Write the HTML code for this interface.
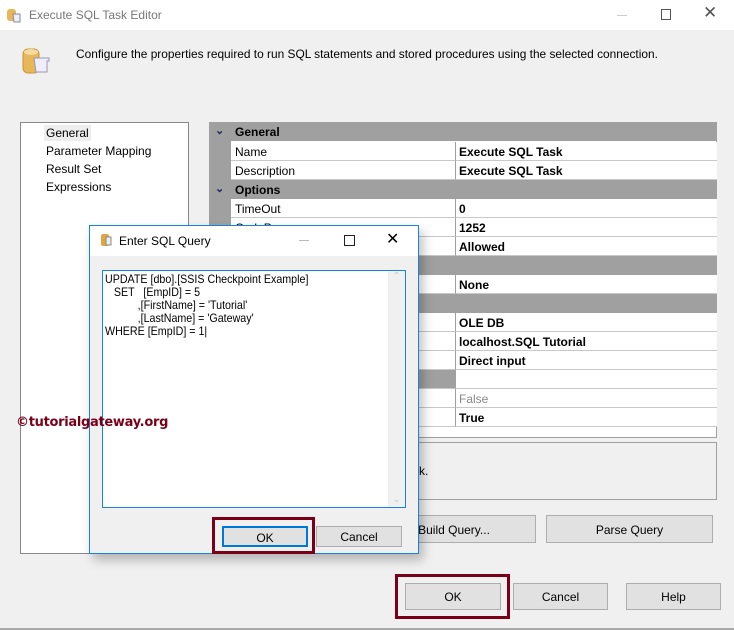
<!DOCTYPE html>
<html><head><meta charset="utf-8"><style>
*{margin:0;padding:0;box-sizing:border-box}
body{width:734px;height:630px;background:#f0f0f0;font-family:"Liberation Sans",sans-serif;font-size:12px;color:#000;position:relative;overflow:hidden}
.a{position:absolute}
.btn{position:absolute;background:#e1e1e1;border:1px solid #adadad;text-align:center;font-size:12px}
.row{position:absolute;left:209px;width:508px;height:19px}
.hd{background:#a0a0a0;font-weight:bold}
.nm{position:absolute;left:22px;width:224px;height:19px;background:#fff;border-bottom:1px solid #c8c8c8;padding:3px 0 0 4px}
.vl{position:absolute;left:246px;width:262px;height:19px;background:#fff;border-bottom:1px solid #c8c8c8;border-left:1px solid #a0a0a0;padding:3px 0 0 3px;font-weight:bold}
.chev{position:absolute;left:6px;top:2px;font-size:11px;color:#1e2a5a}
</style></head><body>
<div class="a" style="left:0;top:0;width:734px;height:30px;background:#fff"></div>
<svg class="a" style="left:6px;top:7px" width="16" height="16"><rect x="1" y="2" width="9" height="12" rx="3" fill="#e8b75a"/><path d="M7 7h7v8H8z" fill="#eef" stroke="#889"/></svg>
<div class="a" style="left:29px;top:8px;color:#777;font-size:12px">Execute SQL Task Editor</div>
<div class="a" style="left:617px;top:15px;width:10px;height:1px;background:#ccc"></div>
<div class="a" style="left:661px;top:9px;width:10px;height:11px;border:1px solid #555"></div>
<div class="a" style="left:703px;top:3px;font-size:17px;color:#555">✕</div>
<svg class="a" style="left:22px;top:46px" width="30" height="32"><rect x="1" y="3" width="16" height="24" rx="5" fill="#e8b75a" stroke="#c9943a"/><ellipse cx="9" cy="6" rx="7" ry="3" fill="#f3dd9c"/><path d="M12 12h15v3l-2 0v11H14z" fill="#eef" stroke="#99a"/></svg>
<div class="a" style="left:76px;top:47px;font-size:11.9px">Configure the properties required to run SQL statements and stored procedures using the selected connection.</div>

<div class="a" style="left:20px;top:122px;width:169px;height:432px;background:#fff;border:1px solid #888"></div>
<div class="a" style="left:44px;top:125px;background:#eee;padding:1px 2px">General</div>
<div class="a" style="left:46px;top:144px">Parameter Mapping</div>
<div class="a" style="left:46px;top:162px">Result Set</div>
<div class="a" style="left:46px;top:180px">Expressions</div>

<div class="a" style="left:209px;top:122px;width:508px;height:316px;background:#fff;border:1px solid #a0a0a0"></div>
<div class="a" style="left:209px;top:122px;width:22px;height:305px;background:#a0a0a0"></div>
<div class="row hd" style="top:122px"><span class="chev">⌄</span><span class="a" style="left:26px;top:3px">General</span></div>
<div class="row" style="top:142px"><div class="nm">Name</div><div class="vl">Execute SQL Task</div></div>
<div class="row" style="top:161px"><div class="nm">Description</div><div class="vl">Execute SQL Task</div></div>
<div class="row hd" style="top:180px"><span class="chev">⌄</span><span class="a" style="left:26px;top:3px">Options</span></div>
<div class="row" style="top:199px"><div class="nm">TimeOut</div><div class="vl">0</div></div>
<div class="row" style="top:218px"><div class="nm">CodePage</div><div class="vl">1252</div></div>
<div class="row" style="top:237px"><div class="nm"></div><div class="vl">Allowed</div></div>
<div class="row hd" style="top:256px"></div>
<div class="row" style="top:275px"><div class="nm"></div><div class="vl">None</div></div>
<div class="row hd" style="top:294px"></div>
<div class="row" style="top:313px"><div class="nm"></div><div class="vl">OLE DB</div></div>
<div class="row" style="top:332px"><div class="nm"></div><div class="vl">localhost.SQL Tutorial</div></div>
<div class="row" style="top:351px"><div class="nm"></div><div class="vl">Direct input</div></div>
<div class="row" style="top:370px"><div class="nm" style="background:#a0a0a0"></div><div class="vl"></div></div>
<div class="row" style="top:389px"><div class="nm"></div><div class="vl" style="font-weight:normal;color:#888">False</div></div>
<div class="row" style="top:408px"><div class="nm"></div><div class="vl">True</div></div>

<div class="a" style="left:209px;top:442px;width:508px;height:58px;border:1px solid #a0a0a0"></div>
<div class="a" style="left:419px;top:464px">k.</div>
<div class="btn" style="left:372px;top:515px;width:164px;height:28px;padding-top:7px">Build Query...</div>
<div class="btn" style="left:546px;top:515px;width:167px;height:28px;padding-top:7px">Parse Query</div>
<div class="a" style="left:395px;top:574px;width:115px;height:45px;border:3px solid #7a0018"></div>
<div class="btn" style="left:405px;top:583px;width:96px;height:27px;padding-top:6px">OK</div>
<div class="btn" style="left:513px;top:583px;width:95px;height:27px;padding-top:6px">Cancel</div>
<div class="btn" style="left:626px;top:583px;width:95px;height:27px;padding-top:6px">Help</div>
<div class="a" style="left:0;top:628px;width:734px;height:2px;background:#aaa"></div>

<div class="a" style="left:89px;top:225px;width:330px;height:329px;background:#f0f0f0;border:1px solid #1883d7;box-shadow:4px 6px 10px rgba(0,0,0,.25)"></div>
<div class="a" style="left:90px;top:226px;width:328px;height:30px;background:#fff"></div>
<svg class="a" style="left:100px;top:233px" width="12" height="14"><rect x="1" y="1" width="8" height="12" rx="2" fill="#e0a740"/><rect x="6" y="4" width="5" height="8" fill="#eee" stroke="#888"/></svg>
<div class="a" style="left:119px;top:234px">Enter SQL Query</div>
<div class="a" style="left:299px;top:240px;width:10px;height:1px;background:#bbb"></div>
<div class="a" style="left:344px;top:235px;width:11px;height:11px;border:1px solid #222"></div>
<div class="a" style="left:386px;top:229px;font-size:16px">✕</div>
<div class="a" style="left:102px;top:270px;width:304px;height:238px;background:#fff;border:1px solid #1883d7"></div>
<div class="a" style="left:388px;top:271px;width:17px;height:236px;background:#f0f0f0;color:#ccc;font-size:10px;text-align:center">⌃<div style="position:absolute;bottom:2px;width:17px">⌄</div></div>
<div class="a" style="left:105px;top:273px;font-size:12px;line-height:13px;white-space:pre;transform:scaleX(0.89);transform-origin:0 0">UPDATE [dbo].[SSIS Checkpoint Example]
   SET   [EmpID] = 5
           ,[FirstName] = 'Tutorial'
           ,[LastName] = 'Gateway'
WHERE [EmpID] = 1|</div>
<div class="a" style="left:212px;top:517px;width:103px;height:37px;border:3px solid #7a0018"></div>
<div class="btn" style="left:222px;top:526px;width:86px;height:21px;border:2px solid #0078d7;padding-top:3px">OK</div>
<div class="btn" style="left:316px;top:526px;width:86px;height:21px;padding-top:3px">Cancel</div>
<div class="a" style="left:16px;top:415px;color:#7a0018;font-weight:bold;font-size:13px;letter-spacing:-0.3px;font-family:'DejaVu Sans',sans-serif">©tutorialgateway.org</div>
</body></html>
